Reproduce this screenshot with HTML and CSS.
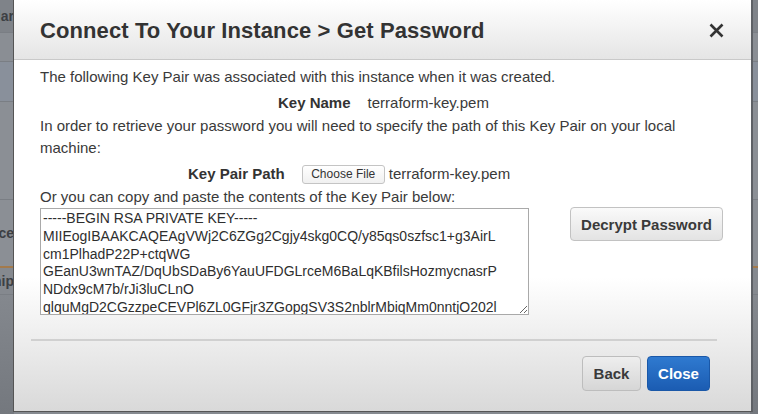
FILE: index.html
```html
<!DOCTYPE html>
<html>
<head>
<meta charset="utf-8">
<link rel="stylesheet" href="styles.css">
</head>
<body>
<div class="page">
  <div class="side side-left">
    <div class="srow r1"><span>Similar</span></div>
    <div class="srow r2"></div>
    <div class="srow r3"></div>
    <div class="srow r4"></div>
    <div class="srow r5"><span>Instance</span></div>
    <div class="srow r6"><span>Ownership</span></div>
    <div class="srow r7"></div>
  </div>
  <div class="side side-right">
    <div class="srow r1"></div>
    <div class="srow r2"></div>
    <div class="srow r3"></div>
    <div class="srow r4"></div>
    <div class="srow r5"></div>
    <div class="srow r6"></div>
    <div class="srow r7"></div>
  </div>
</div>

<div class="modal">
  <div class="modal-header">
    <h1 class="title">Connect To Your Instance &gt; Get Password</h1>
    <button class="close-x" aria-label="Close">
      <svg width="15" height="15" viewBox="0 0 15 15"><path d="M1.5 1.5 L13.5 13.5 M13.5 1.5 L1.5 13.5" stroke="#333" stroke-width="2.6" stroke-linecap="butt" fill="none"/></svg>
    </button>
  </div>
  <div class="modal-body">
    <div class="content">
      <p class="p1">The following Key Pair was associated with this instance when it was created.</p>
      <div class="kv kv-name">
        <span class="label">Key Name</span>
        <span class="value">terraform-key.pem</span>
      </div>
      <p class="p2">In order to retrieve your password you will need to specify the path of this Key Pair on your local machine:</p>
      <div class="kv kv-path">
        <span class="label">Key Pair Path</span>
        <span class="file">
          <button class="choose">Choose File</button>
          <span class="value">terraform-key.pem</span>
        </span>
      </div>
      <p class="p3">Or you can copy and paste the contents of the Key Pair below:</p>
      <div class="key-row">
        <textarea class="key" wrap="off" spellcheck="false">-----BEGIN RSA PRIVATE KEY-----
MIIEogIBAAKCAQEAgVWj2C6ZGg2Cgjy4skg0CQ/y85qs0szfsc1+g3AirL
cm1PlhadP22P+ctqWG
GEanU3wnTAZ/DqUbSDaBy6YauUFDGLrceM6BaLqKBfilsHozmycnasrP
NDdx9cM7b/rJi3luCLnO
qlquMgD2CGzzpeCEVPl6ZL0GFjr3ZGopgSV3S2nblrMbiqMm0nntjO202l
Xh7Tq9fLw2pKdA0vYc</textarea>
        <button class="btn decrypt">Decrypt Password</button>
      </div>
    </div>
    <div class="footer">
      <button class="btn back">Back</button>
      <button class="btn primary">Close</button>
    </div>
  </div>
</div>
</body>
</html>
```

FILE: styles.css
```css
html, body {
  margin: 0;
  padding: 0;
}
body {
  width: 758px;
  height: 414px;
  overflow: hidden;
  background: #868a90;
  font-family: "Liberation Sans", Arial, Helvetica, sans-serif;
  color: #333;
}

.page {
  display: flex;
  justify-content: space-between;
  height: 414px;
}
.side {
  display: flex;
  flex-direction: column;
  overflow: hidden;
}
.side-left { width: 14px; }
.side-right { width: 8px; }
.srow {
  display: flex;
  justify-content: flex-end;
  align-items: center;
  font-size: 14px;
  font-weight: bold;
  color: #3c3f44;
  white-space: nowrap;
  border-bottom: 1px solid #7a7e84;
}
.r1 { height: 32px; background: #7f8389; }
.r2 { height: 28px; background: #8a8e94; }
.r3 { height: 39px; background: #89909b; }
.r4 { height: 97px; background: #8b8f95; }
.r5 { height: 66px; background: #8b8f95; border-bottom: 2px solid #a37a4c; }
.r6 { height: 26px; background: #85898f; }
.r7 { flex: 1; background: linear-gradient(#84888e, #74787e); border-bottom: 0; }

.modal {
  position: absolute;
  left: 13px;
  top: 0;
  width: 737px;
  height: 411px;
  border: 1px solid #555;
  border-top: 0;
  border-right: 2px solid #5e6166;
  display: flex;
  flex-direction: column;
  background: #fff;
}

.modal-header {
  height: 60px;
  border-bottom: 1px solid #c9c9c9;
  background: linear-gradient(#ffffff, #e5e5e5);
  display: flex;
  align-items: center;
  justify-content: space-between;
  padding: 0 27px 0 26px;
  box-sizing: border-box;
  flex: none;
}
.title {
  margin: 0;
  font-size: 22px;
  font-weight: bold;
  color: #333;
  letter-spacing: 0.1px;
  padding-top: 2px;
}
.close-x {
  border: 0;
  background: none;
  padding: 0;
  width: 15px;
  height: 15px;
  display: flex;
  margin-top: 2px;
}

.modal-body {
  flex: 1;
  display: flex;
  flex-direction: column;
  background: linear-gradient(#ffffff 62%, #d9d9d9 100%);
}
.content {
  padding: 7px 27px 0 26px;
  font-size: 15px;
  line-height: 20px;
  color: #3a3a3a;
}
.content p { margin: 0; }
.p2 {
  margin-top: 0 !important;
  line-height: 22px;
  width: 660px;
}
.p3 { margin-top: 1px !important; }

.kv {
  display: flex;
  align-items: center;
  gap: 17px;
  height: 24px;
}
.kv-name { margin-top: 4px; padding-left: 238px; }
.kv-path { margin-top: 3px; padding-left: 148px; }
.label { font-weight: bold; color: #333; }
.value { color: #3a3a3a; }
.file {
  display: flex;
  align-items: center;
  gap: 4px;
}
.choose {
  font-family: "Liberation Sans", Arial, sans-serif;
  font-size: 12px;
  height: 19px;
  width: 83px;
  padding: 0;
  border: 1px solid #c4c4c4;
  border-radius: 3px;
  background: linear-gradient(#ffffff, #f0f0f0);
  color: #333;
  line-height: 17px;
}

.key-row {
  display: flex;
  align-items: flex-start;
  gap: 41px;
  margin-top: 1px;
}
.key {
  width: 489px;
  height: 107px;
  box-sizing: border-box;
  border: 1px solid #a9a9a9;
  padding: 1px 2px 0;
  margin: 0;
  font-family: "Liberation Sans", Arial, sans-serif;
  font-size: 14px;
  line-height: 17.8px;
  color: #2e2e2e;
  resize: both;
  overflow: hidden;
  white-space: pre;
  background: #fff;
}

.btn {
  font-family: "Liberation Sans", Arial, sans-serif;
  font-weight: bold;
  border-radius: 4px;
  box-sizing: border-box;
  cursor: pointer;
}
.decrypt {
  width: 153px;
  height: 34px;
  margin-top: -1px;
  font-size: 15px;
  color: #3a3a3a;
  border: 1px solid #c2c2c2;
  background: linear-gradient(#fafafa, #e3e3e3);
}

.footer {
  margin: 24px 34px 0 17px;
  border-top: 2px solid #d0d0d0;
  padding-top: 15px;
  display: flex;
  justify-content: flex-end;
  gap: 6px;
  padding-right: 7px;
}
.back {
  width: 59px;
  height: 35px;
  font-size: 15px;
  color: #3a3a3a;
  border: 1px solid #bdbdbd;
  background: linear-gradient(#eeeeee, #d6d6d6);
}
.primary {
  width: 63px;
  height: 35px;
  font-size: 15px;
  color: #fff;
  border: 1px solid #1a58a8;
  background: linear-gradient(#2f7ad0, #1b5cb2);
}
```
